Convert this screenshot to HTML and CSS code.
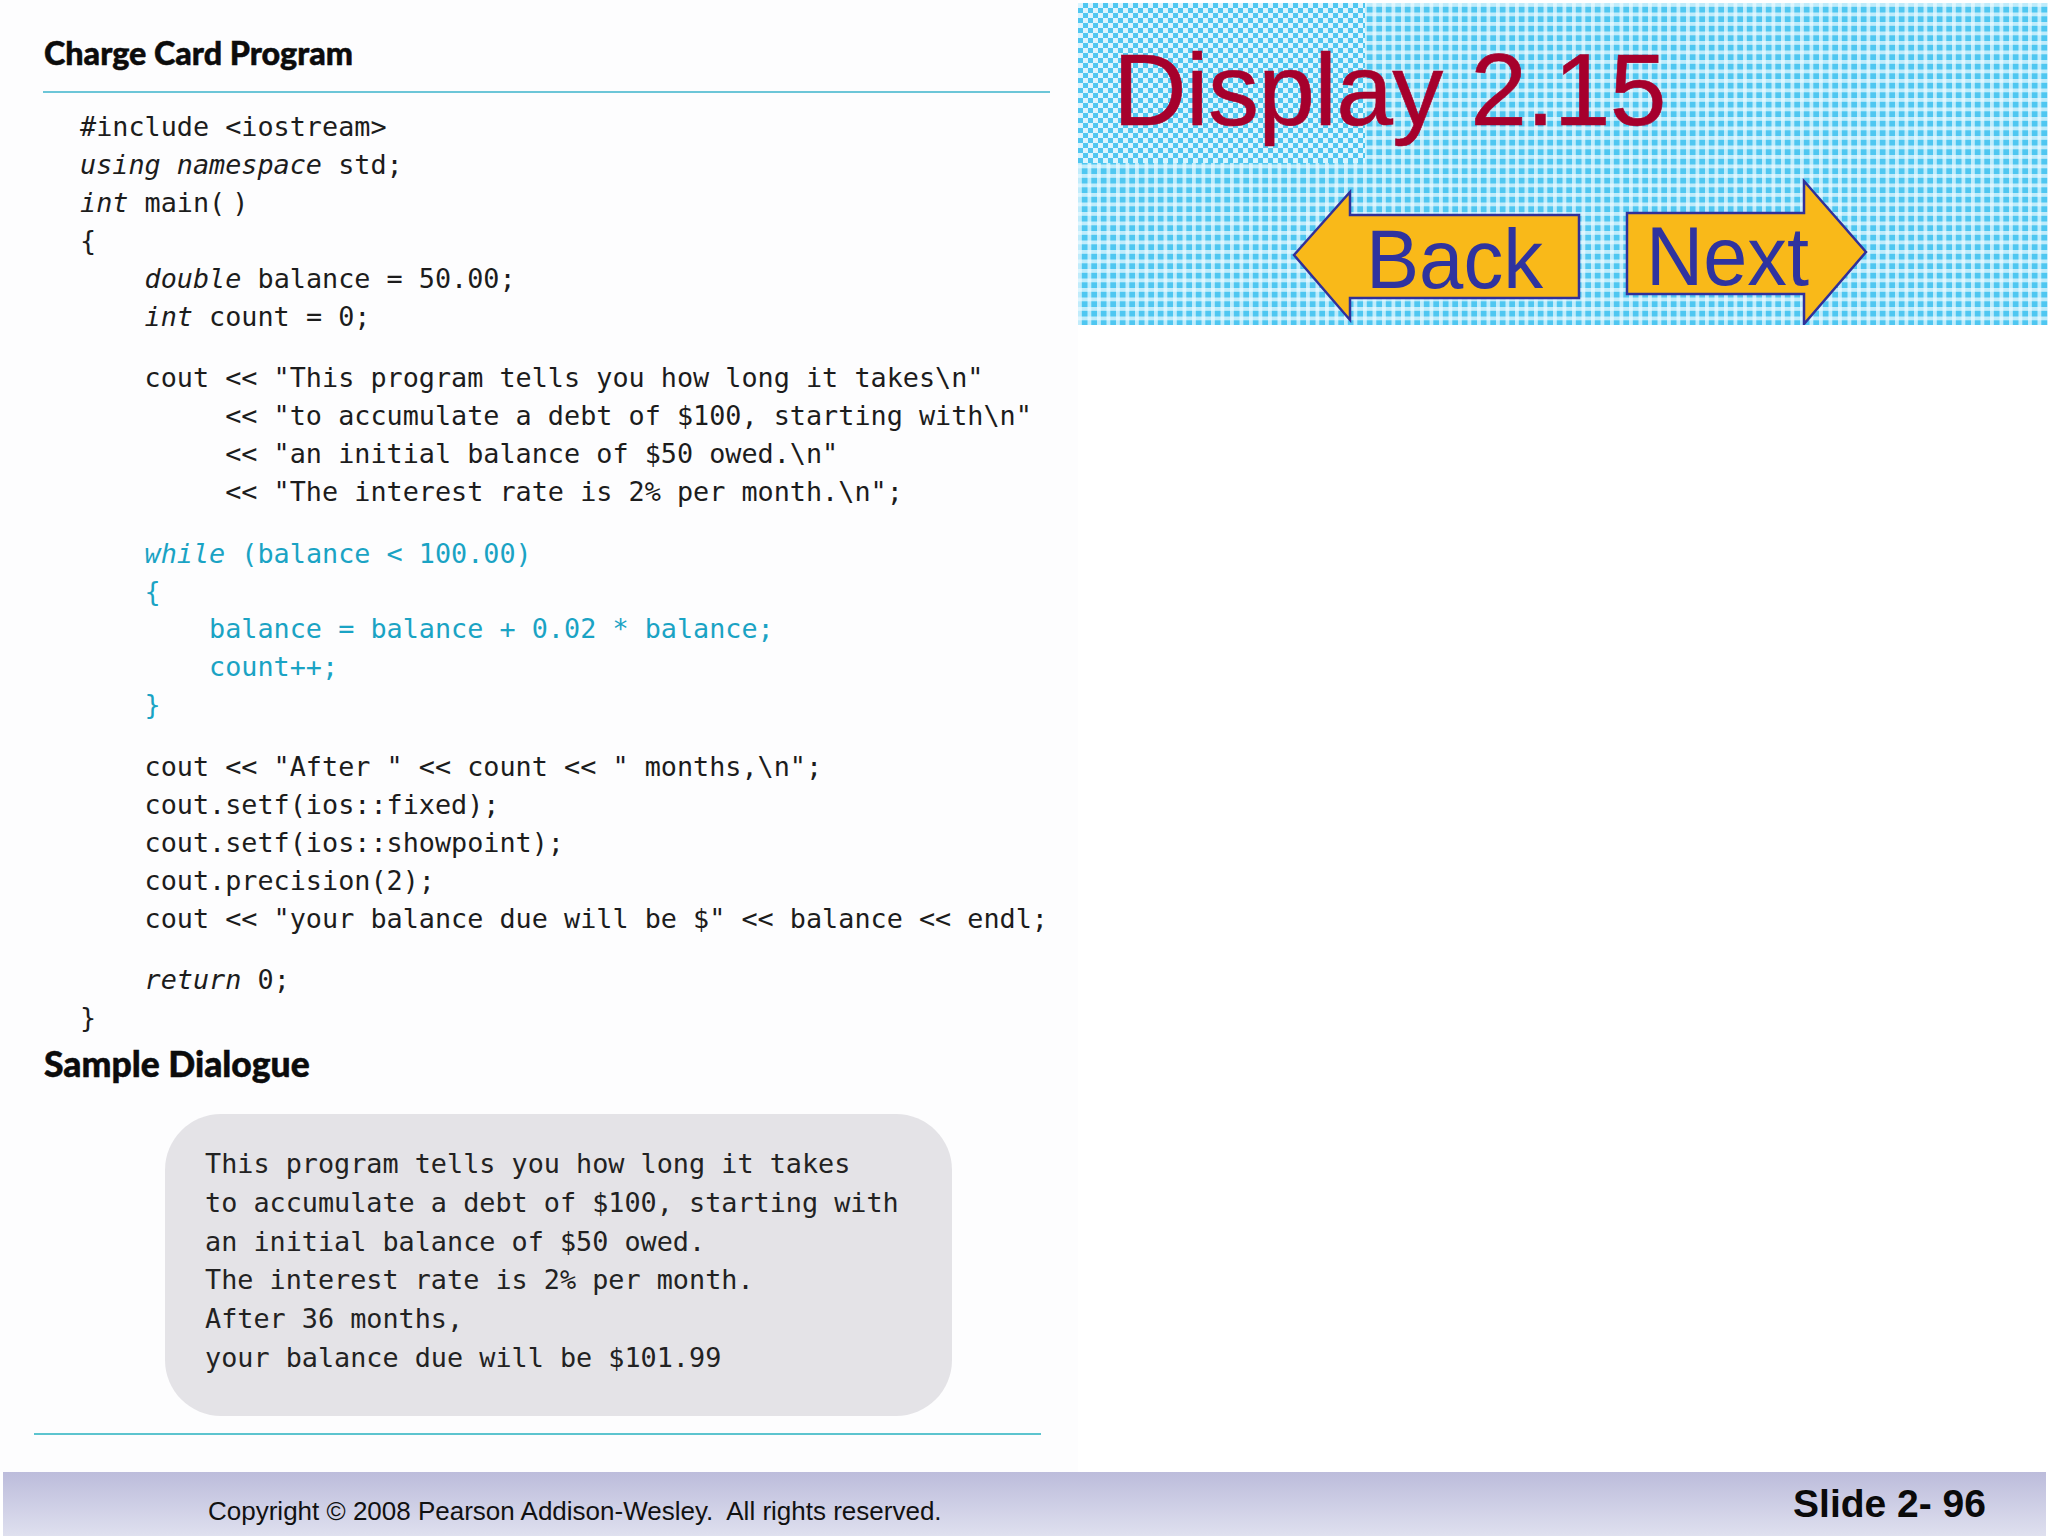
FILE: index.html
```html
<!DOCTYPE html>
<html lang="en">
<head>
  <meta charset="UTF-8">
  <title>Display 2.15</title>
  <link rel="stylesheet" href="styles.css">
</head>
<body>
  <div class="slide">
    <div class="main">
      <div class="listing">
        <h2 class="program-title">Charge Card Program</h2>
        <div class="rule"></div>
        <div class="code">
          <pre class="group">#include &lt;iostream&gt;
<i>using namespace</i> std;
<i>int</i> main(<span class="thin"> </span>)
{
    <i>double</i> balance = 50.00;
    <i>int</i> count = 0;</pre>
          <pre class="group">    cout &lt;&lt; "This program tells you how long it takes\n"
         &lt;&lt; "to accumulate a debt of $100, starting with\n"
         &lt;&lt; "an initial balance of $50 owed.\n"
         &lt;&lt; "The interest rate is 2% per month.\n";</pre>
          <pre class="group highlight">    <i>while</i> (balance &lt; 100.00)
    {
        balance = balance + 0.02 * balance;
        count++;
    }</pre>
          <pre class="group">    cout &lt;&lt; "After " &lt;&lt; count &lt;&lt; " months,\n";
    cout.setf(ios::fixed);
    cout.setf(ios::showpoint);
    cout.precision(2);
    cout &lt;&lt; "your balance due will be $" &lt;&lt; balance &lt;&lt; endl;</pre>
          <pre class="group">    <i>return</i> 0;
}</pre>
        </div>
        <h2 class="dialogue-title">Sample Dialogue</h2>
        <div class="dialogue">
          <pre>This program tells you how long it takes
to accumulate a debt of $100, starting with
an initial balance of $50 owed.
The interest rate is 2% per month.
After 36 months,
your balance due will be $101.99</pre>
        </div>
        <div class="rule rule-bottom"></div>
      </div>

      <div class="side">
        <div class="banner">
          <h1 class="display-title">Display 2.15</h1>
          <svg class="nav-arrows" width="970" height="322" viewBox="0 0 970 322">
            <polygon class="arrow" points="216,252 272,189 272,212 501,212 501,295 272,295 272,317"/>
            <text class="arrow-label" x="288" y="285" textLength="177" lengthAdjust="spacingAndGlyphs">Back</text>
            <polygon class="arrow" points="549,210 726,210 726,178 788,249 726,321 726,291 549,291"/>
            <text class="arrow-label" x="568" y="282" textLength="163" lengthAdjust="spacingAndGlyphs">Next</text>
          </svg>
        </div>
      </div>
    </div>

    <div class="footer">
      <span class="copyright">Copyright © 2008 Pearson Addison-Wesley.&nbsp; All rights reserved.</span>
      <span class="slide-number">Slide 2- 96</span>
    </div>
  </div>
</body>
</html>
```

FILE: styles.css
```css
* {
  margin: 0;
  padding: 0;
  box-sizing: border-box;
}

body {
  background: #fff;
  color: #111;
  font-family: "Liberation Sans", Arial, sans-serif;
}

.slide {
  width: 2048px;
  height: 1536px;
  display: flex;
  flex-direction: column;
  overflow: hidden;
}

.main {
  flex: 1;
  display: flex;
}

.listing {
  width: 1078px;
  padding: 34px 0 0 0;
  background: #fdfdfe;
}

.program-title,
.dialogue-title {
  margin-left: 44px;
  font-family: "Lato", "Open Sans", sans-serif;
  font-weight: 900;
  font-size: 32.3px;
  line-height: 38px;
  color: #0c0c0c;
  -webkit-text-stroke: 0.5px #0c0c0c;
}

.rule {
  width: 1007px;
  height: 2px;
  margin: 19px 0 0 43px;
  background: #6cc6d8;
}

.code {
  margin: 15px 0 0 80px;
}

.group {
  font-family: "DejaVu Sans Mono", "Liberation Mono", monospace;
  font-size: 26.8px;
  line-height: 37.9px;
  color: #1c1c1c;
  margin-bottom: 23.8px;
}

.group:last-child {
  margin-bottom: 0;
}

.thin {
  letter-spacing: -9px;
}

.highlight {
  color: #1aa3c4;
}

.dialogue-title {
  margin-top: 8px;
  font-size: 35.5px;
}

.dialogue {
  width: 787px;
  height: 302px;
  margin: 31px 0 0 165px;
  padding: 31px 0 0 40px;
  background: #e4e3e7;
  border-radius: 56px;
}

.dialogue pre {
  font-family: "DejaVu Sans Mono", "Liberation Mono", monospace;
  font-size: 26.8px;
  line-height: 38.7px;
  color: #222;
}

.rule-bottom {
  margin: 17px 0 0 34px;
  background: #5cc4cf;
}

.side {
  flex: 1;
}

/* halftone: soft white grid lines over the blue */
.banner {
  position: relative;
  height: 322px;
  margin-top: 3px;
  padding: 27px 0 0 35px;
  background-color: #4fc7f1;
  background-image:
    linear-gradient(90deg, rgba(235, 250, 255, 0.72) 3.5px, transparent 3.5px),
    linear-gradient(rgba(235, 250, 255, 0.72) 3.5px, transparent 3.5px);
  background-size: 9.5px 9.5px;
}

/* coarser dither in the top left corner of the banner */
.banner::before {
  content: "";
  position: absolute;
  top: 0;
  left: 0;
  width: 287px;
  height: 160px;
  background-image: conic-gradient(#4fc7f1 25%, #dcf5fe 0 50%, #4fc7f1 0 75%, #dcf5fe 0);
  background-size: 10px 10px;
}

.display-title {
  position: relative;
  font-weight: 400;
  font-size: 102px;
  letter-spacing: -0.7px;
  line-height: 120px;
  color: #a6002c;
  -webkit-text-stroke: 0.6px #a6002c;
}

.nav-arrows {
  position: absolute;
  top: 0;
  left: 0;
}

.arrow {
  fill: #f9b919;
  stroke: #30309a;
  stroke-width: 2.5;
}

.arrow-label {
  font-family: "Liberation Sans", Arial, sans-serif;
  font-size: 84px;
  fill: #2f339f;
}

.footer {
  height: 64px;
  margin: 0 2px 0 3px;
  padding: 0 60px 0 205px;
  display: flex;
  align-items: center;
  justify-content: space-between;
  background: linear-gradient(#bcbcdb, #dfe0ef);
}

.copyright {
  padding-top: 14px;
  font-size: 26px;
  color: #111;
}

.slide-number {
  font-size: 39px;
  font-weight: 700;
  color: #0a0a0a;
}
```
